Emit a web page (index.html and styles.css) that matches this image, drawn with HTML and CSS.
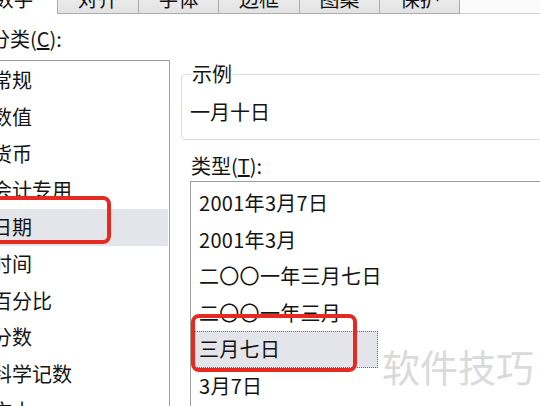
FILE: index.html
```html
<!DOCTYPE html>
<html lang="zh-CN">
<head>
<meta charset="utf-8">
<title>设置单元格格式 - 数字</title>
<link rel="stylesheet" href="styles.css">
</head>
<body>
<div class="viewport">
  <div class="dialog">
    <div class="tabs">
      <div class="tab active">数字</div>
      <div class="tab">对齐</div>
      <div class="tab">字体</div>
      <div class="tab">边框</div>
      <div class="tab">图案</div>
      <div class="tab last">保护</div>
      <div class="tab-fill"></div>
    </div>
    <div class="panel">
      <div class="col-left">
        <div class="label cat-label">分类(<u>C</u>):</div>
        <ul class="list cat-list">
          <li>常规</li>
          <li>数值</li>
          <li>货币</li>
          <li>会计专用</li>
          <li class="sel">日期</li>
          <li>时间</li>
          <li>百分比</li>
          <li>分数</li>
          <li>科学记数</li>
          <li>文本</li>
        </ul>
      </div>
      <div class="col-right">
        <fieldset class="sample">
          <legend>示例</legend>
          <div class="sample-value">一月十日</div>
        </fieldset>
        <div class="label type-label">类型(<u>T</u>):</div>
        <ul class="list type-list">
          <li>2001年3月7日</li>
          <li>2001年3月</li>
          <li>二〇〇一年三月七日</li>
          <li>二〇〇一年三月</li>
          <li class="sel focus">三月七日</li>
          <li>3月7日</li>
        </ul>
      </div>
    </div>
  </div>
  <div class="mark mark-cat"></div>
  <div class="mark mark-type"></div>
  <div class="watermark">软件技巧</div>
</div>
</body>
</html>
```
FILE: styles.css
```css
html, body {
  margin: 0;
  padding: 0;
  background: #ffffff;
}

.viewport {
  position: relative;
  width: 540px;
  height: 406px;
  overflow: hidden;
  background: #ffffff;
  font-family: "Noto Sans CJK SC", "Noto Sans", sans-serif;
  font-size: 20px;
  color: #141414;
}

.dialog {
  width: 620px;
}

/* ---------- tabs ---------- */
.tabs {
  display: flex;
  height: 28px;
  margin-top: -14px;
}

.tab {
  box-sizing: border-box;
  flex: 0 0 80.6px;
  height: 28px;
  line-height: 20px;
  padding-top: 2px;
  text-align: center;
  border-top: 1px solid #adadad;
  border-left: 1px solid #adadad;
  border-bottom: 1px solid #adadad;
  background: linear-gradient(#f3f3f3, #e2e2e2);
  color: #141414;
}

.tab.active {
  flex: 0 0 87px;
  margin-left: -30px;
  background: #ffffff;
  border-bottom: none;
  border-left: none;
}

.tab.last {
  border-right: 1px solid #adadad;
}

.tab-fill {
  flex: 1;
  height: 28px;
  box-sizing: border-box;
  border-bottom: 1px solid #cfcfcf;
  background: #fbfbfb;
}

/* ---------- panel ---------- */
.panel {
  display: flex;
  align-items: flex-start;
  gap: 11px;
}

.col-left {
  flex: 0 0 182px;
  margin-left: -12px;
}

.col-right {
  flex: 0 0 420px;
}

.label {
  line-height: 24px;
  height: 24px;
}

.cat-label {
  margin-top: 13px;
  margin-left: 2px;
}

.list {
  list-style: none;
  margin: 0;
  box-sizing: border-box;
  background: #ffffff;
  border: 1px solid #9e9e9e;
  height: 420px;
}

.list li {
  box-sizing: border-box;
  white-space: nowrap;
}

.cat-list {
  margin-top: 9px;
  padding: 1px 0 0 0;
}

.cat-list li {
  height: 36.75px;
  line-height: 36.75px;
  margin: 0 1px 0 2px;
  padding-left: 1px;
}

.cat-list li.sel {
  background: #e4e5ea;
}

/* ---------- sample group ---------- */
.sample {
  margin: 48px 0 0 0;
  width: 400px;
  box-sizing: border-box;
  border: 1px solid #dcdcdc;
  border-radius: 4px;
  padding: 14px 0 15px 8px;
}

.sample legend {
  padding: 0 1px;
  margin-left: 1px;
  line-height: 24px;
  height: 24px;
}

.sample-value {
  line-height: 24px;
  height: 24px;
}

.type-label {
  margin-top: 14px;
  margin-left: 10px;
}

.type-list {
  margin-top: 3px;
  margin-left: 9px;
  padding: 3px 0 0 0;
}

.type-list li {
  width: 184px;
  height: 36.5px;
  line-height: 36.5px;
  margin-left: 3px;
  padding-left: 5px;
  letter-spacing: 0.3px;
}

.type-list li.sel {
  background: #e4e5ea;
}

.type-list li.focus {
  border: 1px dotted #6b6b6b;
  padding-left: 4px;
  line-height: 34.5px;
}

/* ---------- annotations ---------- */
.mark {
  position: absolute;
  box-sizing: border-box;
  border: 4px solid #e52a22;
  border-radius: 8px;
}

.mark-cat {
  left: -12px;
  top: 196px;
  width: 123px;
  height: 48px;
}

.mark-type {
  left: 191px;
  top: 314px;
  width: 166px;
  height: 58px;
}

.watermark {
  position: absolute;
  left: 382px;
  top: 342px;
  font-size: 38px;
  line-height: 48px;
  color: #dadada;
  letter-spacing: 0;
}
```
